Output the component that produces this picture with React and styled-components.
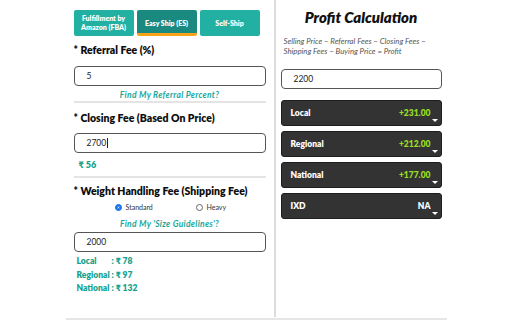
import React from "react";
import styled, { createGlobalStyle } from "styled-components";

const GlobalStyle = createGlobalStyle`
  html, body { margin: 0; padding: 0; background: #fff; }
  body { font-family: Lato, "Noto Sans", sans-serif; color: #111; }
  * { box-sizing: border-box; }
`;

const Page = styled.div`
  width: 512px;
  height: 320px;
  display: flex;
  justify-content: center;
  overflow: hidden;
`;

const Container = styled.div`
  width: 381px;
  height: 320px;
  display: flex;
  border-bottom: 2px solid #e6e6e6;
  padding-bottom: 1px;
`;

const LeftPanel = styled.div`
  width: 210px;
  padding: 10px 8px 0 8px;
  border-right: 2px solid #dcdcdc;
  display: flex;
  flex-direction: column;
`;

const RightPanel = styled.div`
  flex: 1;
  padding: 0 5px 0 5px;
  display: flex;
  flex-direction: column;
`;

const Tabs = styled.div`
  display: flex;
  gap: 3px;
`;

const Tab = styled.div`
  width: 60px;
  height: 26px;
  border-radius: 2px;
  background: ${(p) => (p.$active ? "#1a8a80" : "#22b0a3")};
  color: #fff;
  font-size: 7px;
  font-weight: 800;
  line-height: 9px;
  display: flex;
  align-items: center;
  justify-content: center;
  text-align: center;
  border-bottom: ${(p) => (p.$active ? "3px solid #f7a21b" : "none")};
  padding-top: ${(p) => (p.$active ? "3px" : "0")};
`;

const Label = styled.div`
  font-size: 10.5px;
  font-weight: 800;
  line-height: 14px;
  margin-top: ${(p) => p.$mt || 0}px;
  white-space: nowrap;
  color: #0d0d0d;
`;

const Input = styled.div`
  height: 20px;
  border: 1px solid #555;
  border-radius: 4px;
  font-size: 8.5px;
  padding-left: 12px;
  display: flex;
  align-items: center;
  margin-top: ${(p) => p.$mt || 0}px;
  color: #222;
`;

const Caret = styled.span`
  display: inline-block;
  width: 1px;
  height: 10px;
  background: #222;
  margin-left: 0.5px;
`;

const HelpLink = styled.div`
  font-size: 8.5px;
  font-style: italic;
  font-weight: 700;
  color: #1aa79b;
  text-align: center;
  line-height: 12px;
  margin-top: ${(p) => p.$mt || 0}px;
  letter-spacing: 0.3px;
`;

const Separator = styled.div`
  height: 2px;
  background: #e4e4e4;
  margin-top: ${(p) => p.$mt || 0}px;
`;

const Amount = styled.div`
  color: #14a28e;
  font-size: 9px;
  font-weight: 800;
  line-height: 12px;
  margin-top: ${(p) => p.$mt || 0}px;
  padding-left: 5px;
`;

const RadioRow = styled.div`
  display: grid;
  grid-template-columns: 81px auto;
  font-size: 7px;
  color: #333;
  margin-top: 3px;
  padding-left: 41px;
  align-items: center;
  height: 12px;
`;

const RadioItem = styled.label`
  display: flex;
  align-items: center;
  gap: 4px;
`;

const RadioDot = styled.span`
  width: 7px;
  height: 7px;
  border-radius: 50%;
  border: 1px solid ${(p) => (p.$checked ? "#1a73e8" : "#666")};
  background: ${(p) => (p.$checked ? "#1a73e8" : "#fff")};
  display: inline-flex;
  align-items: center;
  justify-content: center;
  &::after {
    content: "";
    width: 3px;
    height: 3px;
    border-radius: 50%;
    background: ${(p) => (p.$checked ? "#fff" : "transparent")};
    box-shadow: ${(p) => (p.$checked ? "inset 0 0 0 1px #1a73e8" : "none")};
  }
`;

const FeeList = styled.div`
  display: grid;
  grid-template-columns: 35px auto;
  row-gap: 1.5px;
  margin-top: 3px;
  padding-left: 3px;
  color: #14a28e;
  font-size: 8.5px;
  font-weight: 800;
  line-height: 12px;
  white-space: nowrap;
`;

const Title = styled.div`
  font-size: 15px;
  font-weight: 800;
  font-style: italic;
  text-align: center;
  margin-top: 7px;
  line-height: 20px;
  color: #111;
`;

const Formula = styled.div`
  font-size: 7.8px;
  font-style: italic;
  color: #555;
  line-height: 10px;
  margin-top: 9px;
  padding-left: 3px;
`;

const Cards = styled.div`
  display: flex;
  flex-direction: column;
  gap: 5px;
  margin-top: 11px;
`;

const Card = styled.div`
  position: relative;
  height: 26px;
  background: #333;
  border: 1px solid #1e1e1e;
  border-radius: 3px;
  display: flex;
  align-items: center;
  justify-content: space-between;
  padding: 0 10px 0 9px;
  font-size: 8.5px;
  font-weight: 800;
  color: #fff;
`;

const CardValue = styled.span`
  color: ${(p) => (p.$na ? "#fff" : "#96dc22")};
`;

const Arrow = styled.span`
  position: absolute;
  right: 3px;
  bottom: 3px;
  width: 0;
  height: 0;
  border-left: 3px solid transparent;
  border-right: 3px solid transparent;
  border-top: 3px solid #fff;
`;

const cards = [
  { label: "Local", value: "+231.00" },
  { label: "Regional", value: "+212.00" },
  { label: "National", value: "+177.00" },
  { label: "IXD", value: "NA", na: true },
];

export default function App() {
  return (
    <Page>
      <GlobalStyle />
      <Container>
        <LeftPanel>
          <Tabs>
            <Tab>Fulfillment by<br />Amazon (FBA)</Tab>
            <Tab $active>Easy Ship (ES)</Tab>
            <Tab>Self-Ship</Tab>
          </Tabs>
          <Label $mt={7}>* Referral Fee (%)</Label>
          <Input $mt={9}>5</Input>
          <HelpLink $mt={3}>Find My Referral Percent?</HelpLink>
          <Separator $mt={0} />
          <Label $mt={8}>* Closing Fee (Based On Price)</Label>
          <Input $mt={8}>2700<Caret /></Input>
          <Amount $mt={6}>₹ 56</Amount>
          <Separator $mt={5} />
          <Label $mt={6}>* Weight Handling Fee (Shipping Fee)</Label>
          <RadioRow>
            <RadioItem><RadioDot $checked />Standard</RadioItem>
            <RadioItem><RadioDot />Heavy</RadioItem>
          </RadioRow>
          <HelpLink $mt={5}>Find My 'Size Guidelines'?</HelpLink>
          <Input $mt={2}>2000</Input>
          <FeeList>
            <span>Local</span><span>: ₹ 78</span>
            <span>Regional</span><span>: ₹ 97</span>
            <span>National</span><span>: ₹ 132</span>
          </FeeList>
        </LeftPanel>
        <RightPanel>
          <Title>Profit Calculation</Title>
          <Formula>
            Selling Price − Referral Fees − Closing Fees −<br />
            Shipping Fees − Buying Price = Profit
          </Formula>
          <Input $mt={13}>2200</Input>
          <Cards>
            {cards.map((c) => (
              <Card key={c.label}>
                <span>{c.label}</span>
                <CardValue $na={c.na}>{c.value}</CardValue>
                <Arrow />
              </Card>
            ))}
          </Cards>
        </RightPanel>
      </Container>
    </Page>
  );
}
